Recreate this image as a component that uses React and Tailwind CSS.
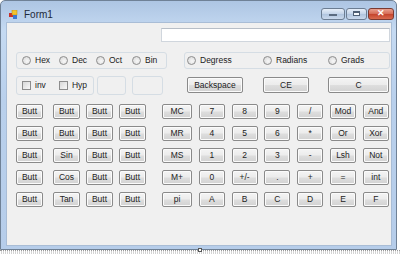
import React from 'react';

const btn =
    'flex items-center justify-center h-[15px] border border-[#8a8a8a] rounded-[2px] bg-[linear-gradient(#f4f4f4_0%,#ececec_48%,#dedede_52%,#d2d2d2_100%)] shadow-[inset_0_0_0_1px_#fbfbfb] text-[8.5px] text-[#222] leading-none overflow-hidden whitespace-nowrap';

function Radio({ label, gap }) {
    return (
        <div className="flex items-center" style={{ width: gap }}>
            <span className="w-[9px] h-[9px] rounded-full border border-[#8d8d8d] bg-[radial-gradient(circle_at_60%_60%,#f8f8f8,#d4d4d4)]"></span>
            <span className="ml-[4px] text-[8.5px] text-[#222]">{label}</span>
        </div>
    );
}

function Check({ label }) {
    return (
        <div className="flex items-center">
            <span className="w-[9px] h-[9px] border border-[#8d8d8d] bg-[linear-gradient(135deg,#d8d8d8,#f8f8f8)]"></span>
            <span className="ml-[4px] text-[8.5px] text-[#222]">{label}</span>
        </div>
    );
}

const leftRows = [
    ['Butt', 'Butt', 'Butt', 'Butt'],
    ['Butt', 'Butt', 'Butt', 'Butt'],
    ['Butt', 'Sin', 'Butt', 'Butt'],
    ['Butt', 'Cos', 'Butt', 'Butt'],
    ['Butt', 'Tan', 'Butt', 'Butt'],
];

const rightRows = [
    ['MC', '7', '8', '9', '/', 'Mod', 'And'],
    ['MR', '4', '5', '6', '*', 'Or', 'Xor'],
    ['MS', '1', '2', '3', '-', 'Lsh', 'Not'],
    ['M+', '0', '+/-', '.', '+', '=', 'int'],
    ['pi', 'A', 'B', 'C', 'D', 'E', 'F'],
];

export default function App() {
    return (
        <div className="w-[400px] h-[254px] bg-white overflow-hidden flex flex-col" style={{ fontFamily: '"Liberation Sans", Arial, sans-serif' }}>
            <div className="w-[397px] h-[250px] flex flex-col border border-[#6f8196] rounded-t-[5px] bg-[linear-gradient(180deg,#adc5e3_0%,#c5daf2_12%,#b9d0ec_40%,#b6cdea_100%)] pl-[5px] pr-[4px] pb-[3px]">
                {/* title bar */}
                <div className="h-[21px] flex items-center shrink-0">
                    <svg width="9" height="9" viewBox="0 0 9 9" className="ml-[3px] mt-[6px]">
                        <rect x="0" y="3" width="4" height="4" fill="#c8302a" />
                        <rect x="3" y="0" width="5" height="5" fill="#f2c230" stroke="#b58a10" strokeWidth="0.5" />
                        <rect x="4" y="5" width="4" height="4" fill="#3b78d0" />
                    </svg>
                    <span className="ml-[6px] mt-[6px] text-[10px] text-[#1e2a3a]">Form1</span>
                    <div className="ml-auto flex items-center gap-[1px] mt-[4px] mr-[-2px]">
                        <div className="w-[24px] h-[12px] rounded-[3px] border border-[#6c7d92] bg-[linear-gradient(#e6eef8,#c3d3e8_50%,#b0c4de_52%,#cad9ec)] flex items-center justify-center">
                            <span className="w-[8px] h-[2px] bg-[#f6f9fc] border border-[#5b6b80] mt-[3px]"></span>
                        </div>
                        <div className="w-[21px] h-[12px] rounded-[3px] border border-[#6c7d92] bg-[linear-gradient(#e6eef8,#c3d3e8_50%,#b0c4de_52%,#cad9ec)] flex items-center justify-center">
                            <span className="w-[7px] h-[5px] border border-[#4f5f74] border-t-2 bg-[#f6f9fc]"></span>
                        </div>
                        <div className="w-[26px] h-[12px] rounded-[3px] border border-[#7a3a32] bg-[linear-gradient(#e9a08f,#d46a55_50%,#c4442d_52%,#d86a4f)] flex items-center justify-center">
                            <span className="text-white text-[9px] font-bold leading-none">✕</span>
                        </div>
                    </div>
                </div>

                {/* client area */}
                <div className="flex-1 bg-[#f0f0f0] border border-[#a9bdd6] flex flex-col pt-[5px] pl-[9px]">
                    <div className="ml-[145px] w-[229px] h-[14px] bg-white border border-[#d0d6dd] border-t-[#b7bec7]"></div>

                    <div className="flex mt-[10px]">
                        <div className="w-[151px] h-[17px] border border-[#d5dde4] rounded-[3px] flex items-center pl-[5px]">
                            <Radio label="Hex" gap="37px" />
                            <Radio label="Dec" gap="37px" />
                            <Radio label="Oct" gap="36px" />
                            <Radio label="Bin" gap="30px" />
                        </div>
                        <div className="ml-[17px] w-[206px] h-[17px] border border-[#d5dde4] rounded-[3px] flex items-center pl-[2px]">
                            <Radio label="Degress" gap="76px" />
                            <Radio label="Radians" gap="65px" />
                            <Radio label="Grads" gap="55px" />
                        </div>
                    </div>

                    <div className="flex mt-[7px] items-start">
                        <div className="w-[78px] h-[19px] border border-[#d5dde4] rounded-[3px] flex items-center pl-[5px] gap-[13px]">
                            <Check label="inv" />
                            <Check label="Hyp" />
                        </div>
                        <div className="ml-[3px] w-[29px] h-[19px] border border-[#d5dde4] rounded-[3px]"></div>
                        <div className="ml-[6px] w-[31px] h-[19px] border border-[#d5dde4] rounded-[3px]"></div>
                        <div className={`${btn} ml-[24px] mt-[1px] w-[56px] h-[16px]`}>Backspace</div>
                        <div className={`${btn} ml-[20px] mt-[1px] w-[46px] h-[16px]`}>CE</div>
                        <div className={`${btn} ml-[19px] mt-[1px] w-[61px] h-[16px]`}>C</div>
                    </div>

                    <div className="flex mt-[9px]">
                        <div className="flex flex-col gap-[7px]">
                            {leftRows.map((row, i) => (
                                <div key={i} className="flex">
                                    <div className={`${btn} w-[27px]`}>{row[0]}</div>
                                    <div className={`${btn} w-[27px] ml-[10px]`}>{row[1]}</div>
                                    <div className={`${btn} w-[27px] ml-[6px]`}>{row[2]}</div>
                                    <div className={`${btn} w-[27px] ml-[6px]`}>{row[3]}</div>
                                </div>
                            ))}
                        </div>
                        <div className="flex flex-col gap-[7px] ml-[16px]">
                            {rightRows.map((row, i) => (
                                <div key={i} className="flex gap-[6.8px]">
                                    <div className={`${btn} w-[30px]`}>{row[0]}</div>
                                    {row.slice(1).map((t, j) => (
                                        <div key={j} className={`${btn} w-[26px]`}>{t}</div>
                                    ))}
                                </div>
                            ))}
                        </div>
                    </div>
                </div>
            </div>
            <div className="relative h-[4px] border-t border-dotted border-[#9a9a9a] bg-[repeating-linear-gradient(90deg,#ffffff_0px,#ffffff_1px,#d4d4d4_1px,#d4d4d4_2px)]">
                <span className="absolute left-[198px] top-[-3px] w-[4px] h-[4px] bg-white border border-[#555]"></span>
            </div>
        </div>
    );
}
